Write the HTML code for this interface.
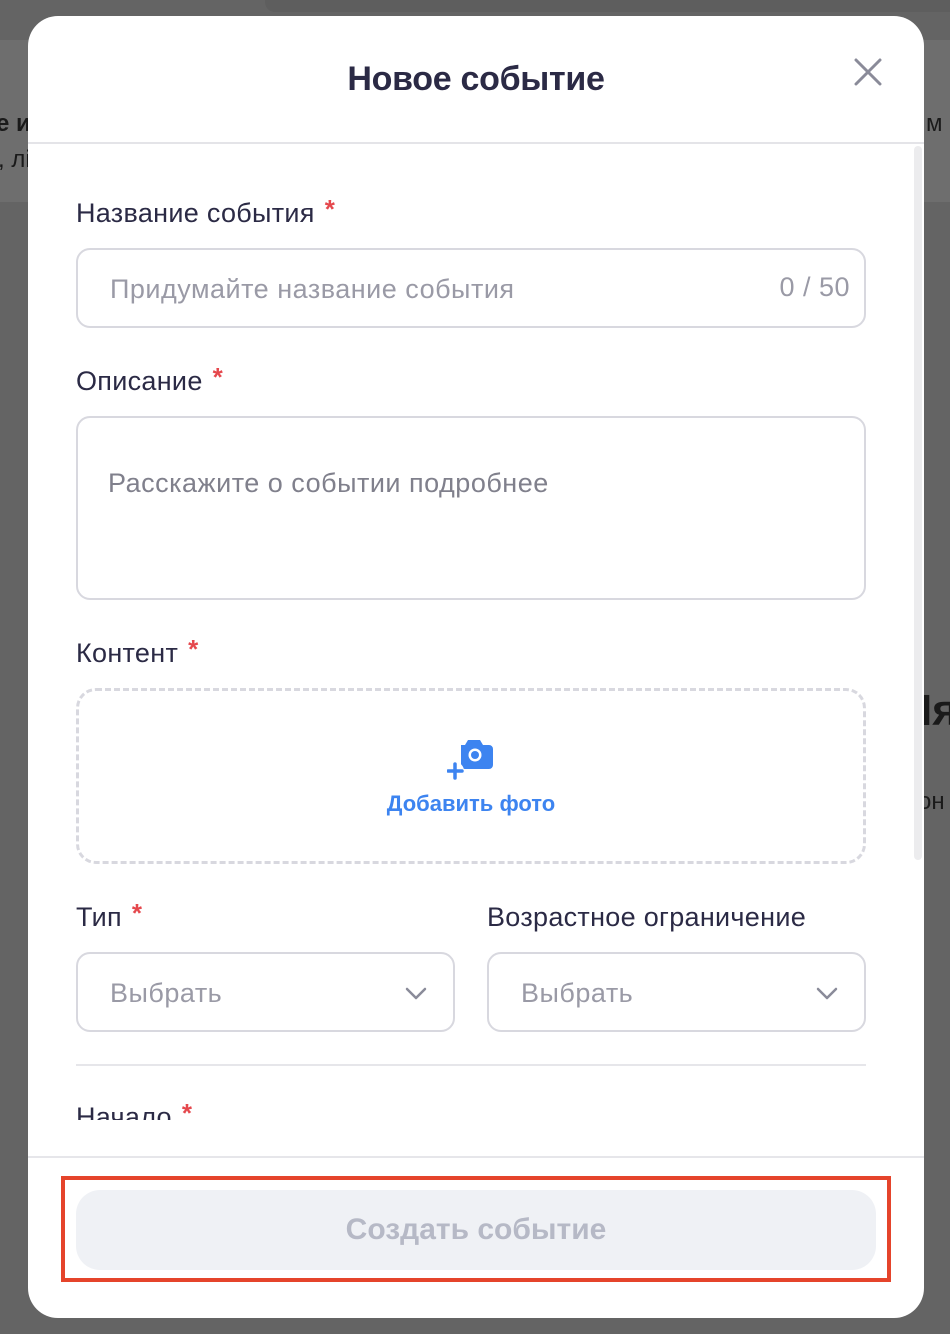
<!DOCTYPE html>
<html><head><meta charset="utf-8"><style>
*{box-sizing:border-box;margin:0;padding:0}
body{width:950px;height:1334px;background:#646464;font-family:"Liberation Sans",sans-serif;position:relative;overflow:hidden}
.bg1{position:absolute;left:0;top:40px;width:950px;height:162px;background:#6e6e6e}
.bg2{position:absolute;left:265px;top:0;width:685px;height:12px;background:#5e5e5e;border-radius:0 0 0 10px}
.bgt{position:absolute;color:#1a1a1a;font-weight:bold;font-size:24px}
.modal{position:absolute;left:28px;top:16px;width:896px;height:1302px;background:#fff;border-radius:30px;overflow:hidden}
h1{position:absolute;left:0;width:896px;top:44px;text-align:center;font-size:34px;font-weight:bold;color:#2b2a45;letter-spacing:-0.3px}
.close{position:absolute;left:826px;top:42px}
.hdiv{position:absolute;left:0;top:126px;width:896px;height:2px;background:#e4e4e8}
.scroll{position:absolute;left:886px;top:130px;width:8px;height:714px;background:#ececee;border-radius:4px}
.lbl{position:absolute;font-size:27px;color:#2b2a45;letter-spacing:0.3px}
.lbl b{color:#e5484d;font-weight:bold;font-size:26px;position:relative;top:-4px;margin-left:10px}
.inp{position:absolute;border:2px solid #d8d8df;border-radius:14px;font-size:27px;color:#9a9aa6;letter-spacing:0.5px}
.ph{position:absolute}
.drop{position:absolute;left:48px;top:672px;width:790px;height:176px;border:3px dashed #d8d8df;border-radius:20px}
.add{position:absolute;left:0;width:100%;top:100px;text-align:center;color:#3d84f0;font-weight:bold;font-size:22px}
.chev{position:absolute;right:26px;top:32px}
.div2{position:absolute;left:48px;top:1048px;width:790px;height:2px;background:#e6e6ea}
.fdiv{position:absolute;left:0;top:1140px;width:896px;height:2px;background:#e6e6ea}
.btn{position:absolute;left:48px;top:1174px;width:800px;height:80px;background:#eff1f5;border-radius:24px;text-align:center;line-height:80px;font-size:30px;font-weight:bold;color:#b6b9c6}
.red{position:absolute;left:61px;top:1176px;width:830px;height:106px;border:4px solid #e5442b}
</style></head><body>
<div class="bg1"></div><div class="bg2"></div>
<div class="bgt" style="left:-4px;top:110px">е и</div>
<div class="bgt" style="left:-2px;top:146px;font-weight:normal">, лі</div>
<div class="bgt" style="left:926px;top:110px;font-weight:normal">м</div>
<div class="bgt" style="left:920px;top:686px;font-size:44px">Iя</div>
<div class="bgt" style="left:918px;top:788px;font-weight:normal">он</div>
<div class="modal">
<h1>Новое событие</h1>
<svg class="close" width="28" height="28" viewBox="0 0 28 28"><path d="M2 2L26 26M26 2L2 26" stroke="#8a8b99" stroke-width="3" stroke-linecap="round"/></svg>
<div class="hdiv"></div>
<div class="scroll"></div>
<div class="lbl" style="left:48px;top:182px">Название события<b>*</b></div>
<div class="inp" style="left:48px;top:232px;width:790px;height:80px"><span class="ph" style="left:32px;top:24px">Придумайте название события</span><span class="ph" style="right:14px;top:22px">0 / 50</span></div>
<div class="lbl" style="left:48px;top:350px">Описание<b>*</b></div>
<div class="inp" style="left:48px;top:400px;width:790px;height:184px"><span class="ph" style="left:30px;top:50px;color:#80808c">Расскажите о событии подробнее</span></div>
<div class="lbl" style="left:48px;top:622px">Контент<b>*</b></div>
<div class="drop">
<svg style="position:absolute;left:368px;top:46px" width="48" height="44" viewBox="0 0 48 44"><path d="M14 8h4l3-5h12l3 5h6a4 4 0 0 1 4 4v16a4 4 0 0 1-4 4H18a4 4 0 0 1-4-4z" fill="#3d84f0"/><circle cx="28" cy="18" r="6.5" fill="#fff"/><circle cx="28" cy="18" r="4" fill="#3d84f0"/><circle cx="8" cy="34" r="9" fill="#fff"/><path d="M8 27v14M1 34h14" stroke="#3d84f0" stroke-width="3.5" stroke-linecap="round"/></svg>
<div class="add">Добавить фото</div></div>
<div class="lbl" style="left:48px;top:886px">Тип<b>*</b></div>
<div class="lbl" style="left:459px;top:886px">Возрастное ограничение</div>
<div class="inp" style="left:48px;top:936px;width:379px;height:80px"><span class="ph" style="left:32px;top:24px">Выбрать</span><svg class="chev" width="22" height="14" viewBox="0 0 22 14"><path d="M2 3l9 9 9-9" fill="none" stroke="#8a8b99" stroke-width="2.5" stroke-linecap="round" stroke-linejoin="round"/></svg></div>
<div class="inp" style="left:459px;top:936px;width:379px;height:80px"><span class="ph" style="left:32px;top:24px">Выбрать</span><svg class="chev" width="22" height="14" viewBox="0 0 22 14"><path d="M2 3l9 9 9-9" fill="none" stroke="#8a8b99" stroke-width="2.5" stroke-linecap="round" stroke-linejoin="round"/></svg></div>
<div class="div2"></div>
<div style="position:absolute;left:0;top:1086px;width:896px;height:18px;overflow:hidden"><div class="lbl" style="left:48px;top:0">Начало<b>*</b></div></div>
<div class="fdiv"></div>
<div class="btn">Создать событие</div>
</div>
<div class="red"></div>
</body></html>
